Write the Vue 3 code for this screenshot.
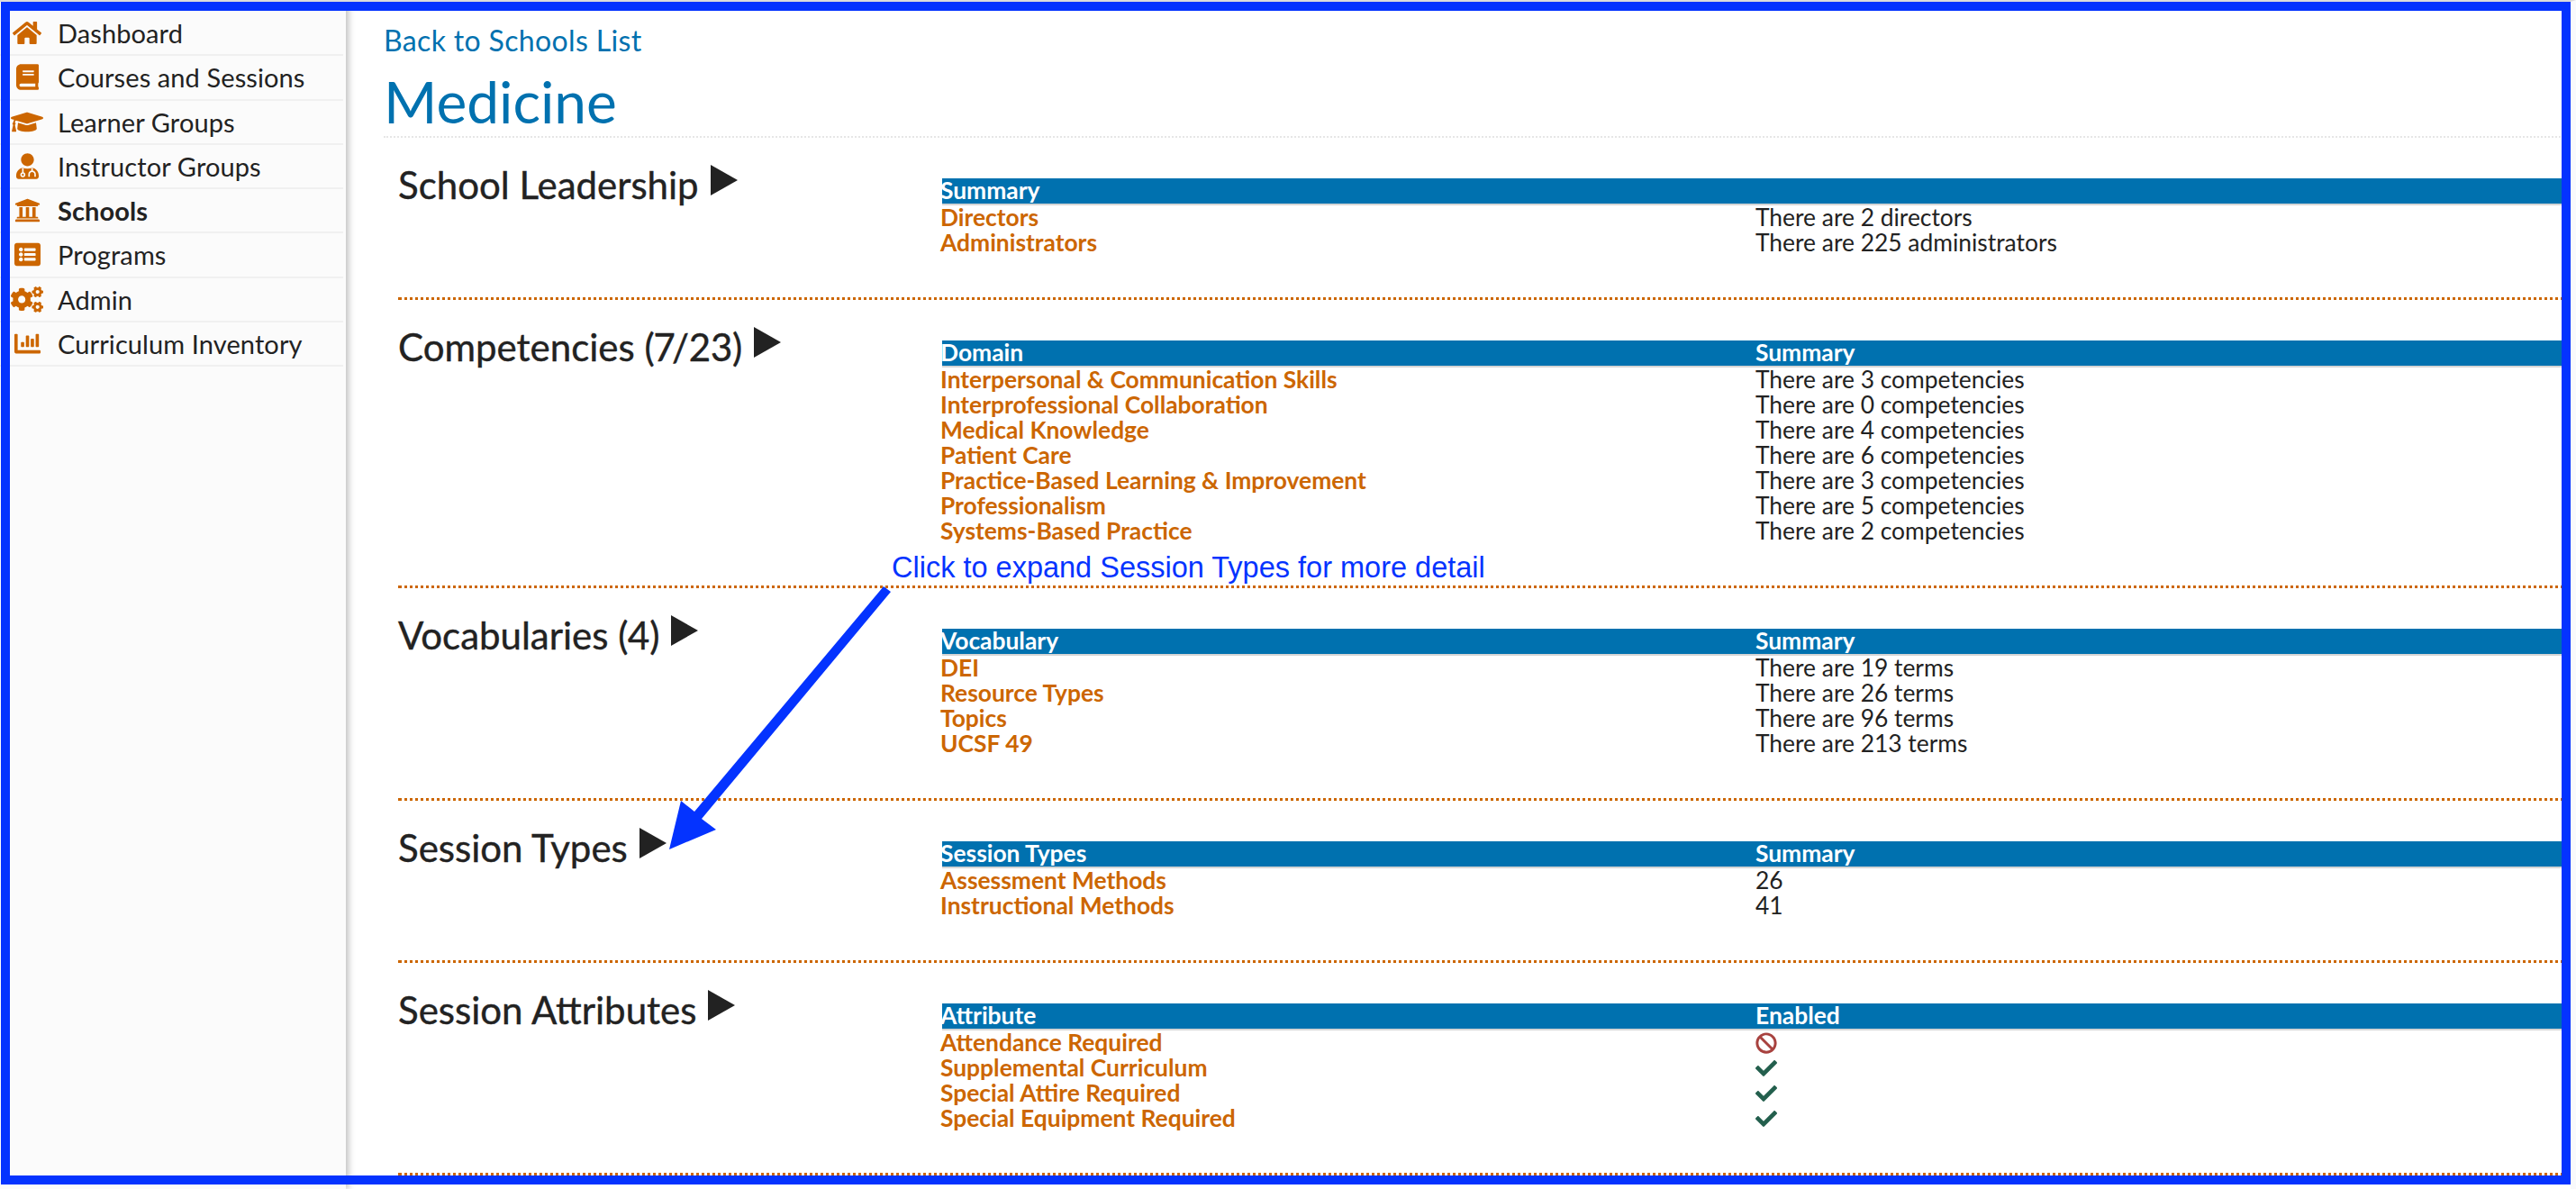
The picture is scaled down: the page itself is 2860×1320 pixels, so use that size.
<template>
  <div class="page">
    <!-- Side navigation -->
    <nav class="sidebar" aria-label="Main navigation">
      <a v-for="item in navItems" :key="item.label" class="navRow" :class="{ active: item.active }" href="#">
        <span class="navIconBox">
          <svg class="navIcon" :viewBox="item.box" :style="{ width: item.width + 'px' }" aria-hidden="true">
            <path :d="item.path" fill="currentColor" />
            <path v-if="item.cut" :d="item.cut" fill="none" stroke="#fbfbfb" stroke-width="30" />
          </svg>
        </span>
        <span>{{ item.label }}</span>
      </a>
    </nav>

    <!-- School detail -->
    <main class="content">
      <a class="backLink" href="#">Back to Schools List</a>
      <h1 class="title">Medicine</h1>
      <div class="sections">
        <section v-for="section in sections" :key="section.title" class="section">
          <h2 class="sectionTitle">
            <span>{{ section.title }}</span>
            <span class="caret"></span>
          </h2>
          <table class="summary">
            <thead>
              <tr>
                <th>{{ section.head[0] }}</th>
                <th>{{ section.head[1] }}</th>
              </tr>
            </thead>
            <tbody>
              <tr v-for="row in section.rows" :key="row[0]">
                <td class="rowName">{{ row[0] }}</td>
                <td>
                  <svg v-if="row[1] === 'yes'" class="mark markYes" viewBox="0 0 512 512" aria-label="Yes">
                    <path :d="checkPath" fill="currentColor" />
                  </svg>
                  <svg v-else-if="row[1] === 'no'" class="mark markNo" viewBox="0 0 512 512" aria-label="No">
                    <path :d="banPath" fill="currentColor" />
                  </svg>
                  <template v-else>{{ row[1] }}</template>
                </td>
              </tr>
            </tbody>
          </table>
        </section>
      </div>
    </main>

    <!-- Screenshot annotation -->
    <span class="callout">Click to expand Session Types for more detail</span>
    <svg class="calloutArrow" viewBox="0 0 2860 1320" aria-hidden="true">
      <polygon points="981,651 989,657 779,909 795,921 743,943 756,889 771,901" fill="#0433ff" />
    </svg>
    <div class="frame"></div>
  </div>
</template>

<script setup>
const navItems = [
  {
    label: 'Dashboard',
    box: '0 0 576 512',
    width: 32,
    path: 'M280.37 148.26L96 300.11V464a16 16 0 0 0 16 16l112.06-.29a16 16 0 0 0 15.92-16V368a16 16 0 0 1 16-16h64a16 16 0 0 1 16 16v95.64a16 16 0 0 0 16 16.05L464 480a16 16 0 0 0 16-16V300L295.67 148.26a12.19 12.19 0 0 0-15.3 0zM571.6 251.47L488 182.56V44.05a12 12 0 0 0-12-12h-56a12 12 0 0 0-12 12v72.61L318.47 43a48 48 0 0 0-61 0L4.34 251.47a12 12 0 0 0-1.6 16.9l25.5 31A12 12 0 0 0 45.15 301l235.22-193.74a12.19 12.19 0 0 1 15.3 0L530.9 301a12 12 0 0 0 16.9-1.6l25.5-31a12 12 0 0 0-1.7-16.93z'
  },
  {
    label: 'Courses and Sessions',
    box: '0 0 448 512',
    width: 25,
    path: 'M448 360V24c0-13.3-10.7-24-24-24H96C43 0 0 43 0 96v320c0 53 43 96 96 96h328c13.3 0 24-10.7 24-24v-16c0-7.5-3.5-14.3-8.9-18.7-4.2-15.4-4.2-59.3 0-74.7 5.4-4.3 8.9-11.1 8.9-18.6zM128 134c0-3.3 2.7-6 6-6h212c3.3 0 6 2.7 6 6v20c0 3.3-2.7 6-6 6H134c-3.3 0-6-2.7-6-6v-20zm0 64c0-3.3 2.7-6 6-6h212c3.3 0 6 2.7 6 6v20c0 3.3-2.7 6-6 6H134c-3.3 0-6-2.7-6-6v-20zm253.4 250H96c-17.7 0-32-14.3-32-32 0-17.6 14.4-32 32-32h285.4c-1.9 17.1-1.9 46.9 0 64z'
  },
  {
    label: 'Learner Groups',
    box: '0 0 640 512',
    width: 36,
    path: 'M622.34 153.2L343.4 67.5c-15.2-4.67-31.6-4.67-46.79 0L17.66 153.2c-23.54 7.23-23.54 38.36 0 45.59l48.63 14.94c-10.67 13.19-17.23 29.28-17.88 46.9C38.78 266.15 32 276.11 32 288c0 10.78 5.68 19.85 13.86 25.65L20.33 428.53C18.11 438.52 25.71 448 35.94 448h56.11c10.24 0 17.84-9.48 15.62-19.47L82.14 313.65C90.32 307.85 96 298.78 96 288c0-11.57-6.47-21.25-15.66-26.87.76-15.02 8.44-28.3 20.69-36.72L296.6 284.5c9.06 2.78 26.44 6.25 46.79 0l278.95-85.7c23.55-7.24 23.55-38.36 0-45.6zM352.79 315.09c-28.53 8.76-52.84 3.92-65.59 0l-145.02-44.55L128 384c0 35.35 85.96 64 192 64s192-28.65 192-64l-14.18-113.47-145.03 44.56z'
  },
  {
    label: 'Instructor Groups',
    box: '0 0 448 512',
    width: 25,
    path: 'M224 256c70.7 0 128-57.3 128-128S294.7 0 224 0 96 57.3 96 128s57.3 128 128 128zM128 286C54 298 0 364 0 442v22c0 26.5 21.5 48 48 48h352c26.5 0 48-21.5 48-48v-22c0-78-54-144-128-156-30 12-62 18-96 18s-66-6-96-18z',
    cut: 'M132 290V390M132 390a36 36 0 1 0 .1 0zM316 290V350M256 466V416a60 60 0 0 1 120 0V466'
  },
  {
    label: 'Schools',
    box: '0 0 512 512',
    width: 29,
    active: true,
    path: 'M496 128v16a8 8 0 0 1-8 8h-24v12c0 6.627-5.373 12-12 12H60c-6.627 0-12-5.373-12-12v-12H24a8 8 0 0 1-8-8v-16a8 8 0 0 1 4.941-7.392l232-88a7.996 7.996 0 0 1 6.118 0l232 88A8 8 0 0 1 496 128zm-24 304H40c-13.255 0-24 10.745-24 24v16a8 8 0 0 0 8 8h464a8 8 0 0 0 8-8v-16c0-13.255-10.745-24-24-24zM96 192v192H60c-6.627 0-12 5.373-12 12v20h416v-20c0-6.627-5.373-12-12-12h-36V192h-64v192h-64V192h-64v192h-64V192H96z'
  },
  {
    label: 'Programs',
    box: '0 0 512 512',
    width: 29,
    path: 'M464 480H48c-26.51 0-48-21.49-48-48V80c0-26.51 21.49-48 48-48h416c26.51 0 48 21.49 48 48v352c0 26.51-21.49 48-48 48zM128 120c-22.091 0-40 17.909-40 40s17.909 40 40 40 40-17.909 40-40-17.909-40-40-40zm0 96c-22.091 0-40 17.909-40 40s17.909 40 40 40 40-17.909 40-40-17.909-40-40-40zm0 96c-22.091 0-40 17.909-40 40s17.909 40 40 40 40-17.909 40-40-17.909-40-40-40zm288-136v-32c0-6.627-5.373-12-12-12H204c-6.627 0-12 5.373-12 12v32c0 6.627 5.373 12 12 12h200c6.627 0 12-5.373 12-12zm0 96v-32c0-6.627-5.373-12-12-12H204c-6.627 0-12 5.373-12 12v32c0 6.627 5.373 12 12 12h200c6.627 0 12-5.373 12-12zm0 96v-32c0-6.627-5.373-12-12-12H204c-6.627 0-12 5.373-12 12v32c0 6.627 5.373 12 12 12h200c6.627 0 12-5.373 12-12z'
  },
  {
    label: 'Admin',
    box: '0 0 640 512',
    width: 36,
    path: 'M512.1 191l-8.2 14.3c-3 5.3-9.4 7.5-15.1 5.4-11.8-4.4-22.6-10.7-32.1-18.6-4.6-3.8-5.8-10.5-2.8-15.7l8.2-14.3c-6.9-8-12.3-17.3-15.9-27.4h-16.5c-6 0-11.2-4.3-12.2-10.3-2-12-2.1-24.6 0-37.1 1-6 6.2-10.4 12.2-10.4h16.5c3.6-10.1 9-19.4 15.9-27.4l-8.2-14.3c-3-5.2-1.9-11.9 2.8-15.7 9.5-7.9 20.4-14.2 32.1-18.6 5.7-2.1 12.1.1 15.1 5.4l8.2 14.3c10.5-1.9 21.2-1.9 31.7 0L552 6.3c3-5.3 9.4-7.5 15.1-5.4 11.8 4.4 22.6 10.7 32.1 18.6 4.6 3.8 5.8 10.5 2.8 15.7l-8.2 14.3c6.9 8 12.3 17.3 15.9 27.4h16.5c6 0 11.2 4.3 12.2 10.3 2 12 2.1 24.6 0 37.1-1 6-6.2 10.4-12.2 10.4h-16.5c-3.6 10.1-9 19.4-15.9 27.4l8.2 14.3c3 5.2 1.9 11.9-2.8 15.7-9.5 7.9-20.4 14.2-32.1 18.6-5.7 2.1-12.1-.1-15.1-5.4l-8.2-14.3c-10.4 1.9-21.2 1.9-31.7 0zm-10.5-58.8c38.5 29.6 82.4-14.3 52.8-52.8-38.5-29.7-82.4 14.3-52.8 52.8zM386.3 286.1l33.7 16.8c10.1 5.8 14.5 18.1 10.5 29.1-8.9 24.2-26.4 46.4-42.6 65.8-7.4 8.9-20.2 11.1-30.3 5.3l-29.1-16.8c-16 13.7-34.6 24.6-54.9 31.7v33.6c0 11.6-8.3 21.6-19.7 23.6-24.6 4.2-50.4 4.4-75.9 0-11.5-2-20-11.9-20-23.6V418c-20.3-7.2-38.9-18-54.9-31.7L74 403c-10 5.8-22.9 3.6-30.3-5.3-16.2-19.4-33.3-41.6-42.2-65.7-4-10.9.4-23.2 10.5-29.1l33.3-16.8c-3.9-20.9-3.9-42.4 0-63.4L12 205.8c-10.1-5.8-14.6-18.1-10.5-29 8.9-24.2 26-46.4 42.2-65.8 7.4-8.9 20.2-11.1 30.3-5.3l29.1 16.8c16-13.7 34.6-24.6 54.9-31.7V57.1c0-11.5 8.2-21.5 19.6-23.5 24.6-4.2 50.5-4.4 76-.1 11.5 2 20 11.9 20 23.6v33.6c20.3 7.2 38.9 18 54.9 31.7l29.1-16.8c10-5.8 22.9-3.6 30.3 5.3 16.2 19.4 33.2 41.6 42.1 65.8 4 10.9.1 23.2-10 29.1l-33.7 16.8c3.9 21 3.9 42.5 0 63.5zm-117.6 21.1c59.2-77-28.7-164.9-105.7-105.7-59.2 77 28.7 164.9 105.7 105.7zm243.4 182.7l-8.2 14.3c-3 5.3-9.4 7.5-15.1 5.4-11.8-4.4-22.6-10.7-32.1-18.6-4.6-3.8-5.8-10.5-2.8-15.7l8.2-14.3c-6.9-8-12.3-17.3-15.9-27.4h-16.5c-6 0-11.2-4.3-12.2-10.3-2-12-2.1-24.6 0-37.1 1-6 6.2-10.4 12.2-10.4h16.5c3.6-10.1 9-19.4 15.9-27.4l-8.2-14.3c-3-5.2-1.9-11.9 2.8-15.7 9.5-7.9 20.4-14.2 32.1-18.6 5.7-2.1 12.1.1 15.1 5.4l8.2 14.3c10.5-1.9 21.2-1.9 31.7 0l8.2-14.3c3-5.3 9.4-7.5 15.1-5.4 11.8 4.4 22.6 10.7 32.1 18.6 4.6 3.8 5.8 10.5 2.8 15.7l-8.2 14.3c6.9 8 12.3 17.3 15.9 27.4h16.5c6 0 11.2 4.3 12.2 10.3 2 12 2.1 24.6 0 37.1-1 6-6.2 10.4-12.2 10.4h-16.5c-3.6 10.1-9 19.4-15.9 27.4l8.2 14.3c3 5.2 1.9 11.9-2.8 15.7-9.5 7.9-20.4 14.2-32.1 18.6-5.7 2.1-12.1-.1-15.1-5.4l-8.2-14.3c-10.4 1.9-21.2 1.9-31.7 0zM501.6 431c38.5 29.6 82.4-14.3 52.8-52.8-38.5-29.6-82.4 14.3-52.8 52.8z'
  },
  {
    label: 'Curriculum Inventory',
    box: '0 0 512 512',
    width: 29,
    path: 'M332.8 320h38.4c6.4 0 12.8-6.4 12.8-12.8V172.8c0-6.4-6.4-12.8-12.8-12.8h-38.4c-6.4 0-12.8 6.4-12.8 12.8v134.4c0 6.4 6.4 12.8 12.8 12.8zm96 0h38.4c6.4 0 12.8-6.4 12.8-12.8V76.8c0-6.4-6.4-12.8-12.8-12.8h-38.4c-6.4 0-12.8 6.4-12.8 12.8v230.4c0 6.4 6.4 12.8 12.8 12.8zm-288 0h38.4c6.4 0 12.8-6.4 12.8-12.8v-70.4c0-6.4-6.4-12.8-12.8-12.8h-38.4c-6.4 0-12.8 6.4-12.8 12.8v70.4c0 6.4 6.4 12.8 12.8 12.8zm96 0h38.4c6.4 0 12.8-6.4 12.8-12.8V108.8c0-6.4-6.4-12.8-12.8-12.8h-38.4c-6.4 0-12.8 6.4-12.8 12.8v198.4c0 6.4 6.4 12.8 12.8 12.8zM496 384H64V80c0-8.84-7.16-16-16-16H16C7.16 64 0 71.16 0 80v336c0 17.67 14.33 32 32 32h464c8.84 0 16-7.16 16-16v-32c0-8.84-7.16-16-16-16z'
  }
]

const checkPath = 'M173.898 439.404l-166.4-166.4c-9.997-9.997-9.997-26.206 0-36.204l36.203-36.204c9.997-9.998 26.207-9.998 36.204 0L192 312.69 432.095 72.596c9.997-9.997 26.207-9.997 36.204 0l36.203 36.204c9.997 9.997 9.997 26.206 0 36.204l-294.4 294.401c-9.998 9.997-26.207 9.997-36.204-.001z'
const banPath = 'M256 8C119.034 8 8 119.033 8 256s111.034 248 248 248 248-111.034 248-248S392.967 8 256 8zm130.108 117.892c65.448 65.448 70 165.481 20.677 235.637L150.47 105.216c70.204-49.356 170.226-44.735 235.638 20.676zM125.892 386.108c-65.448-65.448-70-165.481-20.677-235.637L361.53 406.784c-70.203 49.356-170.226 44.736-235.638-20.676z'

const sections = [
  {
    title: 'School Leadership',
    head: ['Summary', ''],
    rows: [
      ['Directors', 'There are 2 directors'],
      ['Administrators', 'There are 225 administrators']
    ]
  },
  {
    title: 'Competencies (7/23)',
    head: ['Domain', 'Summary'],
    rows: [
      ['Interpersonal & Communication Skills', 'There are 3 competencies'],
      ['Interprofessional Collaboration', 'There are 0 competencies'],
      ['Medical Knowledge', 'There are 4 competencies'],
      ['Patient Care', 'There are 6 competencies'],
      ['Practice-Based Learning & Improvement', 'There are 3 competencies'],
      ['Professionalism', 'There are 5 competencies'],
      ['Systems-Based Practice', 'There are 2 competencies']
    ]
  },
  {
    title: 'Vocabularies (4)',
    head: ['Vocabulary', 'Summary'],
    rows: [
      ['DEI', 'There are 19 terms'],
      ['Resource Types', 'There are 26 terms'],
      ['Topics', 'There are 96 terms'],
      ['UCSF 49', 'There are 213 terms']
    ]
  },
  {
    title: 'Session Types',
    head: ['Session Types', 'Summary'],
    rows: [
      ['Assessment Methods', '26'],
      ['Instructional Methods', '41']
    ]
  },
  {
    title: 'Session Attributes',
    head: ['Attribute', 'Enabled'],
    rows: [
      ['Attendance Required', 'no'],
      ['Supplemental Curriculum', 'yes'],
      ['Special Attire Required', 'yes'],
      ['Special Equipment Required', 'yes']
    ]
  }
]
</script>

<style>
html,
body {
  margin: 0;
  background: #fff;
}
</style>

<style scoped>
.page {
  position: relative;
  display: flex;
  box-sizing: border-box;
  width: 2860px;
  height: 1320px;
  overflow: hidden;
  border-top: 2px solid #dcdcdc;
  border-right: 6px solid #f9f9fb;
  background: #fff;
  color: #222;
  font-family: Lato, "Open Sans", sans-serif;
}

.sidebar {
  flex: 0 0 384px;
  box-sizing: border-box;
  padding: 11px 3px 0 0;
  background: #fbfbfb;
  box-shadow: 3px 0 7px rgba(0, 0, 0, 0.25);
  position: relative;
  z-index: 1;
}

.navRow {
  display: flex;
  align-items: center;
  box-sizing: border-box;
  height: 49.25px;
  border-bottom: 2px solid #f0f0f0;
  font-size: 29px;
  letter-spacing: 0.1px;
  color: #222;
  text-decoration: none;
}

.navRow.active {
  font-weight: 700;
}

.navIconBox {
  flex: 0 0 36px;
  display: flex;
  justify-content: center;
  margin: 0 16px 0 12px;
}

.navIcon {
  display: block;
  height: 29px;
  color: #cc6600;
}

.content {
  flex: 1;
  min-width: 0;
  padding: 0 0 0 42px;
}

.backLink {
  display: block;
  margin-top: 26px;
  font-size: 32px;
  letter-spacing: 0.35px;
  line-height: 34px;
  color: #0071af;
  text-decoration: none;
}

.title {
  margin: 19px 0 0;
  padding-bottom: 6px;
  border-bottom: 2px dotted #e6e6e6;
  font-size: 64px;
  line-height: 64px;
  font-weight: 400;
  color: #0071af;
}

.sections {
  padding-left: 16px;
}

.section {
  display: grid;
  grid-template-columns: 604px 1fr;
  align-items: start;
  padding: 45px 0 46px;
  border-bottom: 3px dotted #cc6600;
}

.sectionTitle {
  display: flex;
  align-items: flex-start;
  gap: 13px;
  margin: -20px 0 0 0;
  font-size: 42px;
  line-height: 54px;
  font-weight: 400;
  font-variant-numeric: proportional-nums;
  -webkit-text-stroke: 0.4px #222;
  color: #222;
}

.caret {
  width: 0;
  height: 0;
  margin-top: 5px;
  border-style: solid;
  border-width: 17px 0 17px 30px;
  border-color: transparent transparent transparent #222;
}

.summary {
  width: 100%;
  table-layout: fixed;
  border-collapse: separate;
  border-spacing: 0;
  font-size: 26.4px;
  line-height: 27px;
}

.summary th,
.summary td {
  box-sizing: border-box;
  padding: 0 0 1px;
  height: 28px;
  text-align: left;
  vertical-align: middle;
  white-space: nowrap;
}

.summary th {
  height: 30px;
  background: #0071af;
  border-bottom: 2px solid #d5d5d5;
  color: #fff;
  font-weight: 700;
}

.summary th:first-child {
  width: 903px;
  text-indent: -2px;
}

.summary td {
  color: #222;
}

.summary .rowName {
  font-weight: 700;
  color: #cc6600;
  text-indent: -2px;
}

.mark {
  display: block;
  width: 24px;
  height: 24px;
}

.markYes {
  color: #235f4d;
}

.markNo {
  color: #a8423f;
}

.callout {
  position: absolute;
  left: 990px;
  top: 610px;
  font-family: "Liberation Sans", Arial, sans-serif;
  font-size: 32.5px;
  line-height: 36px;
  color: #0433ff;
  white-space: nowrap;
  z-index: 3;
}

.calloutArrow {
  position: absolute;
  left: 0;
  top: -2px;
  width: 2860px;
  height: 1320px;
  z-index: 3;
}

.frame {
  position: absolute;
  left: 1px;
  top: 0;
  right: 0;
  bottom: 5px;
  box-sizing: border-box;
  border: 10px solid #0433ff;
  z-index: 4;
}
</style>
